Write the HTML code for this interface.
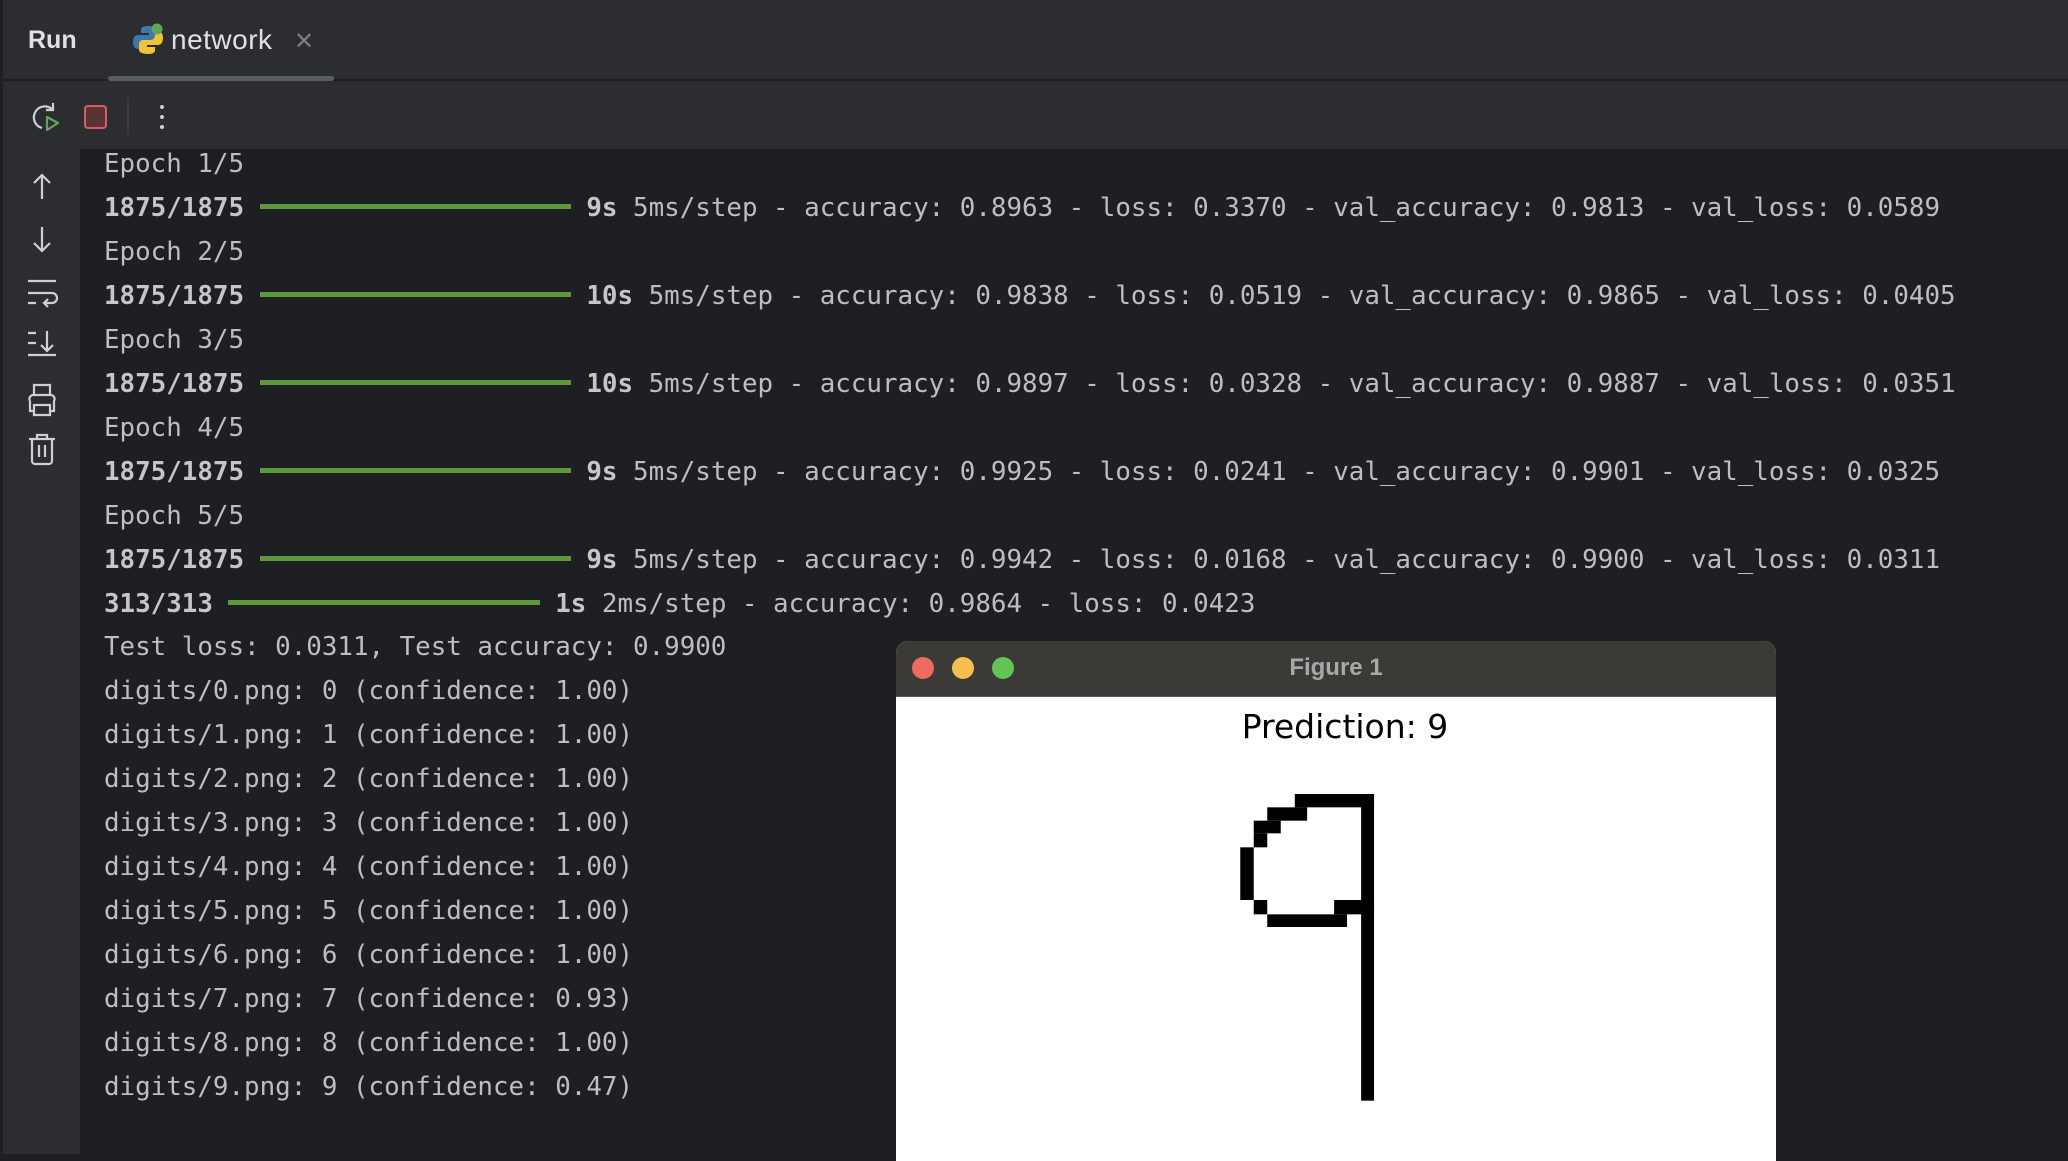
<!DOCTYPE html>
<html><head><meta charset="utf-8"><style>
*{margin:0;padding:0;box-sizing:border-box}
body{width:2068px;height:1154px;overflow:hidden;background:#1e1f22;position:relative;font-family:"Liberation Sans",sans-serif}
#tabs{position:absolute;left:0;top:0;width:2068px;height:81px;background:#2b2d30;border-bottom:2px solid #1e1f22}
#tool{position:absolute;left:0;top:81px;width:2068px;height:68px;background:#2b2d30}
#gut{position:absolute;left:0;top:149px;width:80px;height:1005px;background:#2b2d30}
#edge{position:absolute;left:0;top:0;width:3px;height:1154px;background:#1e1f22}
.out{position:absolute;left:104px;top:143px;font-family:"DejaVu Sans Mono","Liberation Mono",monospace;font-size:25.85px;line-height:43.96px;color:#bcbec4;white-space:pre}
.out b{font-weight:bold;color:#c4c6cc}
.bar{display:inline-block;width:20ch;height:5px;background:#5f9a3a;vertical-align:middle;position:relative;top:-2px}
#fig{position:absolute;left:896px;top:641px;width:880px;height:520px;background:#fff;border-radius:12px 12px 0 0;overflow:hidden}
#tb{height:56px;background:#3b3a36;border-bottom:1px solid #5a5955;position:relative}
.dot{position:absolute;top:16px;width:22px;height:22px;border-radius:50%}
</style></head><body>
<div id="tabs">
 <div style="position:absolute;left:28px;top:26px;font-size:25px;font-weight:bold;color:#dfe1e5">Run</div>
 <svg style="position:absolute;left:132px;top:23px" width="32" height="34" viewBox="0 0 32 34">
  <path d="M16 3c-6 0-7 2-7 4v3h8v2H6c-3 0-5 3-5 7s2 7 5 7h3v-4c0-3 2-5 5-5h7c2 0 4-2 4-4V7c0-2-3-4-9-4z" fill="#3c78aa"/>
  <path d="M16 31c6 0 7-2 7-4v-3h-8v-2h11c3 0 5-3 5-7s-2-7-5-7h-3v4c0 3-2 5-5 5h-7c-2 0-4 2-4 4v6c0 2 3 4 9 4z" fill="#f2c335"/>
  <circle cx="25" cy="6" r="5.5" fill="#5fa85a"/>
 </svg>
 <div style="position:absolute;left:171px;top:24px;font-size:28px;color:#dfe1e5;letter-spacing:0.5px">network</div>
 <div style="position:absolute;left:294px;top:27px;font-size:24px;color:#7a7e85">✕</div>
 <div style="position:absolute;left:108px;top:76px;width:226px;height:5px;border-radius:3px;background:#5a5d63"></div>
</div>
<div id="tool">
 <svg style="position:absolute;left:30px;top:20px" width="32" height="32" viewBox="0 0 32 32" fill="none">
  <path d="M22 8A11 11 0 1 0 12 27" stroke="#ced0d6" stroke-width="2.2"/>
  <path d="M23 2v7h-7" stroke="#ced0d6" stroke-width="2.2"/>
  <path d="M17 16l11 6-11 7z" stroke="#5fa85a" stroke-width="2.2" stroke-linejoin="round"/>
 </svg>
 <div style="position:absolute;left:84px;top:24px;width:23px;height:24px;border-radius:4px;background:#5a3434;border:2.5px solid #db5c5c"></div>
 <div style="position:absolute;left:127px;top:16px;width:2px;height:38px;background:#393b40"></div>
 <div style="position:absolute;left:160px;top:24px;width:4px;height:4px;border-radius:2px;background:#ced0d6;box-shadow:0 10px 0 #ced0d6,0 20px 0 #ced0d6"></div>
</div>
<div id="gut">
 <svg style="position:absolute;left:26px;top:22px" width="32" height="260" viewBox="0 0 32 260" fill="none" stroke="#ced0d6" stroke-width="2.2">
  <path d="M16 4v24M8 12l8-8 8 8"/>
  <path d="M16 56v24M8 72l8 8 8-8"/>
  <path d="M2 110h28M2 122h24a5 5 0 0 1 0 10h-8M22 128l-4 4 4 4M2 132h8"/>
  <path d="M2 162h8M2 172h8M2 184h28M21 160v20M15 174l6 6 6-6"/>
  <path d="M8 224v-10h16v10M4 230a4 4 0 0 1 4-6h16a4 4 0 0 1 4 6v10h-4M8 240H4v-10M8 234h16v10H8z"/>
 </svg>
 <svg style="position:absolute;left:26px;top:283px" width="32" height="34" viewBox="0 0 32 34" fill="none" stroke="#ced0d6" stroke-width="2.2">
  <path d="M3 7h26M11 7V3h10v4M6 7v22a3 3 0 0 0 3 3h14a3 3 0 0 0 3-3V7M13 13v12M19 13v12"/>
 </svg>
</div>
<div id="edge"></div>
<div class="out">Epoch 1/5
<b>1875/1875</b> <span class="bar"></span> <b>9s</b> 5ms/step - accuracy: 0.8963 - loss: 0.3370 - val_accuracy: 0.9813 - val_loss: 0.0589
Epoch 2/5
<b>1875/1875</b> <span class="bar"></span> <b>10s</b> 5ms/step - accuracy: 0.9838 - loss: 0.0519 - val_accuracy: 0.9865 - val_loss: 0.0405
Epoch 3/5
<b>1875/1875</b> <span class="bar"></span> <b>10s</b> 5ms/step - accuracy: 0.9897 - loss: 0.0328 - val_accuracy: 0.9887 - val_loss: 0.0351
Epoch 4/5
<b>1875/1875</b> <span class="bar"></span> <b>9s</b> 5ms/step - accuracy: 0.9925 - loss: 0.0241 - val_accuracy: 0.9901 - val_loss: 0.0325
Epoch 5/5
<b>1875/1875</b> <span class="bar"></span> <b>9s</b> 5ms/step - accuracy: 0.9942 - loss: 0.0168 - val_accuracy: 0.9900 - val_loss: 0.0311
<b>313/313</b> <span class="bar"></span> <b>1s</b> 2ms/step - accuracy: 0.9864 - loss: 0.0423
Test loss: 0.0311, Test accuracy: 0.9900
digits/0.png: 0 (confidence: 1.00)
digits/1.png: 1 (confidence: 1.00)
digits/2.png: 2 (confidence: 1.00)
digits/3.png: 3 (confidence: 1.00)
digits/4.png: 4 (confidence: 1.00)
digits/5.png: 5 (confidence: 1.00)
digits/6.png: 6 (confidence: 1.00)
digits/7.png: 7 (confidence: 0.93)
digits/8.png: 8 (confidence: 1.00)
digits/9.png: 9 (confidence: 0.47)</div>
<div id="fig">
 <div id="tb">
  <div class="dot" style="left:16px;background:#ee6a5e"></div>
  <div class="dot" style="left:56px;background:#f5be4f"></div>
  <div class="dot" style="left:96px;background:#61c454"></div>
  <div style="position:absolute;left:0;right:0;top:13px;text-align:center;font-size:24px;font-weight:bold;color:#a8a8a6">Figure 1</div>
 </div>
 <div style="position:absolute;left:0;right:0;top:66px;text-align:center;font-family:'DejaVu Sans',sans-serif;font-size:33px;color:#000;padding-left:18px">Prediction: 9</div>
</div>
<svg style="position:absolute;left:880px;top:630px" width="920" height="524" viewBox="0 0 1568 1572" preserveAspectRatio="none" fill="#000">
 <rect x="707" y="492" width="135" height="40"/>
 <rect x="820" y="492" width="22" height="920"/>
 <rect x="660" y="532" width="68" height="40"/>
 <rect x="637" y="572" width="46" height="38"/>
 <rect x="637" y="610" width="23" height="42"/>
 <rect x="614" y="652" width="23" height="158"/>
 <rect x="637" y="810" width="23" height="43"/>
 <rect x="660" y="853" width="136" height="38"/>
 <rect x="774" y="810" width="68" height="43"/>
</svg>
</body></html>
